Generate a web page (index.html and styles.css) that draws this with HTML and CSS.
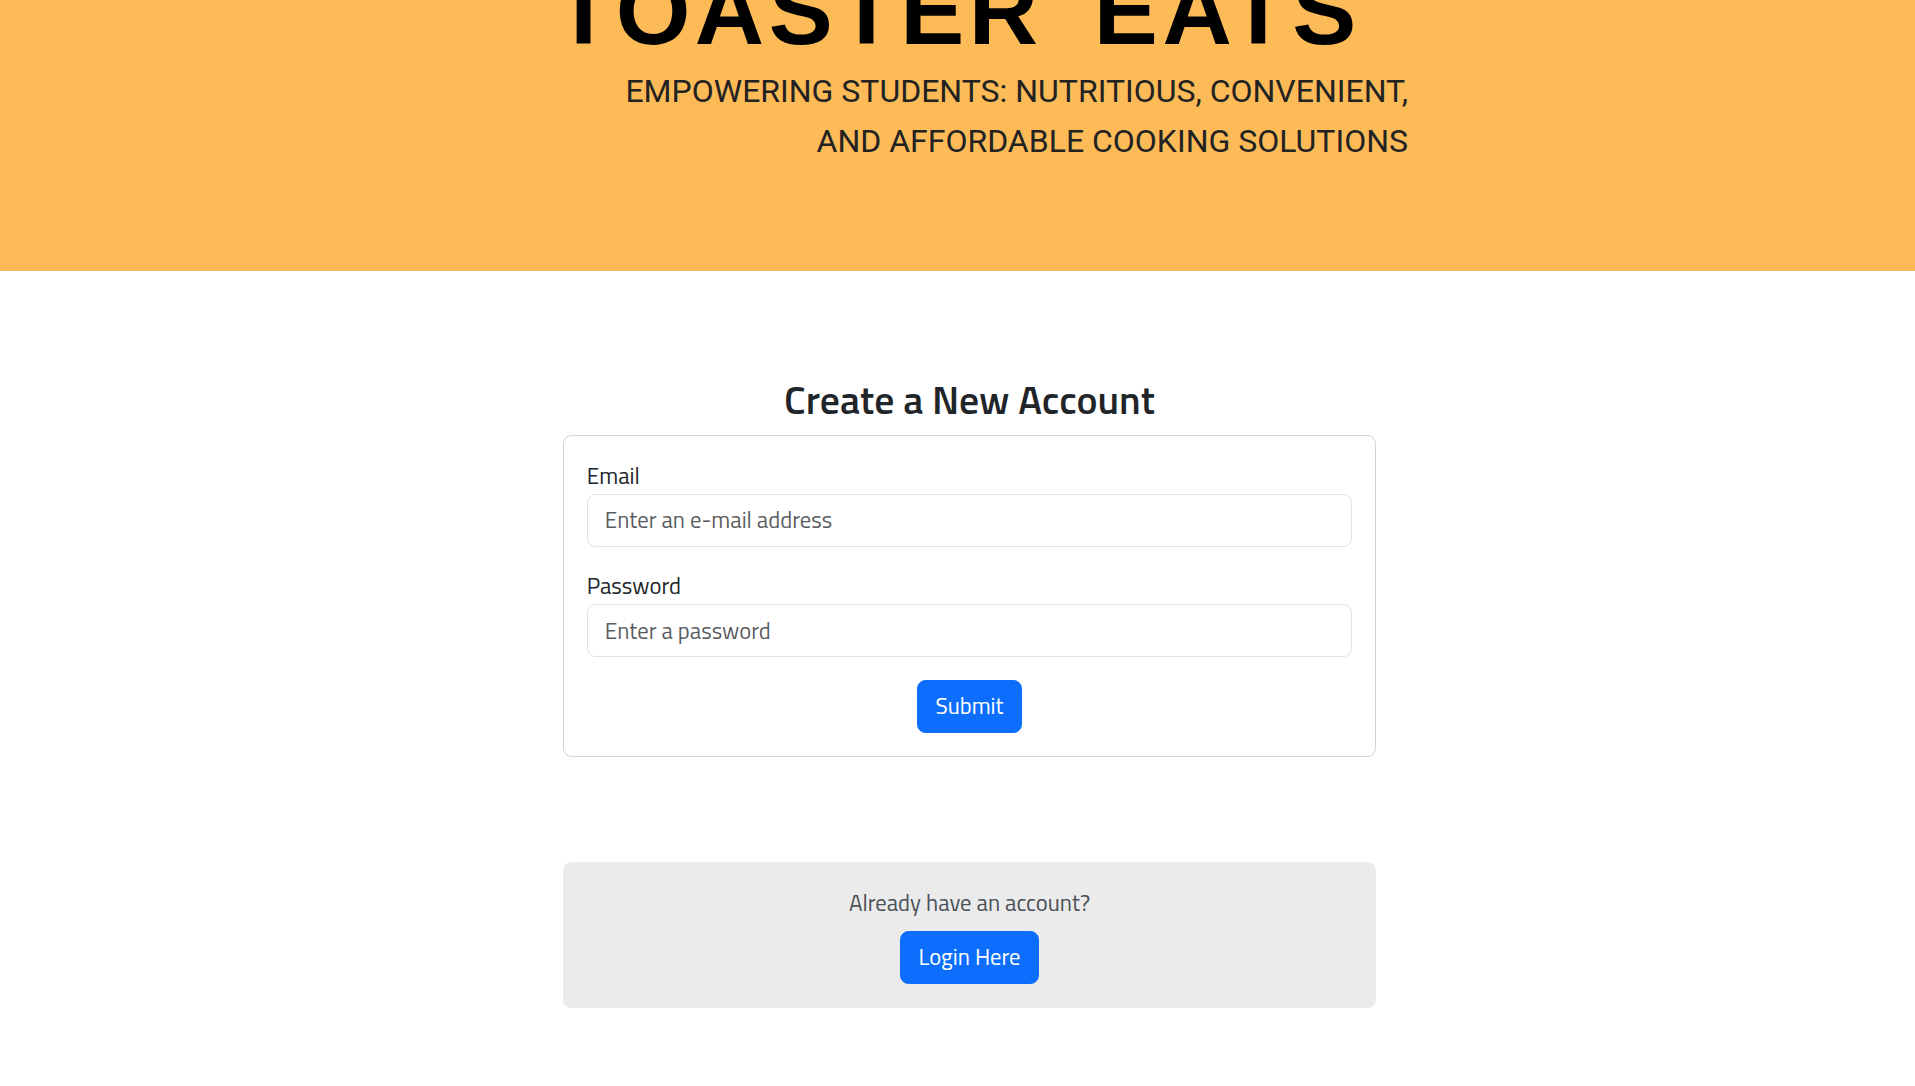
FILE: index.html
```html
<!DOCTYPE html>
<html lang="en">
<head>
<meta charset="utf-8">
<title>Toaster Eats - Create a New Account</title>
<link rel="stylesheet" href="styles.css">
</head>
<body>
<header class="hero">
  <h1 class="hero-title">TOASTER EATS</h1>
  <p class="hero-tagline">EMPOWERING STUDENTS: NUTRITIOUS, CONVENIENT,<br>AND AFFORDABLE COOKING SOLUTIONS</p>
</header>
<main class="page">
  <div class="panel">
    <h3 class="panel-title">Create a New Account</h3>
    <form class="signup-card">
      <div class="field">
        <label class="field-label" for="email">Email</label>
        <input class="field-input" id="email" type="email" placeholder="Enter an e-mail address">
      </div>
      <div class="field">
        <label class="field-label" for="password">Password</label>
        <input class="field-input" id="password" type="password" placeholder="Enter a password">
      </div>
      <div class="actions">
        <button class="btn" type="button">Submit</button>
      </div>
    </form>
    <div class="login-box">
      <p class="login-text">Already have an account?</p>
      <button class="btn" type="button">Login Here</button>
    </div>
  </div>
</main>
</body>
</html>
```
FILE: styles.css
```css
html {
  font-size: 22.667px;
}
body {
  margin: 0;
  font-family: "Titillium Web", "Open Sans", sans-serif;
  font-size: 1rem;
  line-height: 1.5;
  color: #212529;
  background: #fff;
}
.hero {
  background: #fdbb58;
  padding-bottom: 105px;
  overflow: hidden;
}
.hero-title {
  margin: -44px 0 0;
  text-align: center;
  font-family: "Liberation Sans", Arial, sans-serif;
  font-weight: 700;
  font-size: 96px;
  line-height: normal;
  letter-spacing: 4.5px;
  word-spacing: 20px;
  color: #000;
}
.hero-tagline {
  margin: 0;
  padding-right: 507px;
  text-align: right;
  font-family: Roboto, "Liberation Sans", sans-serif;
  font-size: 32px;
  line-height: 50px;
  color: #222;
}
.page {
  padding: 105px 0 60px 24px;
}
.panel {
  width: 813px;
  margin: 0 auto;
}
.panel-title {
  margin: 0 0 0.5rem;
  text-align: center;
  font-size: 1.75rem;
  font-weight: 600;
  line-height: 1.2;
}
.signup-card {
  border: 1px solid #d3d3d3;
  border-radius: 0.375rem;
  padding: 1rem;
}
.field {
  margin-bottom: 1rem;
}
.field-label {
  display: block;
  margin-bottom: 1px;
}
.field-input {
  display: block;
  box-sizing: border-box;
  width: 100%;
  padding: 0.375rem 0.75rem;
  font-family: inherit;
  font-size: 1rem;
  line-height: 1.5;
  color: #212529;
  background: #fff;
  border: 1px solid #dee2e6;
  border-radius: 0.375rem;
}
.field-input::placeholder {
  color: rgba(33, 37, 41, 0.75);
}
.actions {
  text-align: center;
}
.btn {
  display: inline-block;
  padding: 0.375rem 0.75rem;
  font-family: inherit;
  font-size: 1rem;
  line-height: 1.5;
  color: #fff;
  background: #0d6efd;
  border: 1px solid #0d6efd;
  border-radius: 0.375rem;
}
.login-box {
  margin-top: 105px;
  padding: 24px 1rem;
  background: #ebebeb;
  border-radius: 0.375rem;
  text-align: center;
}
.login-text {
  margin: 0 0 0.5rem;
  color: #495057;
}
```
